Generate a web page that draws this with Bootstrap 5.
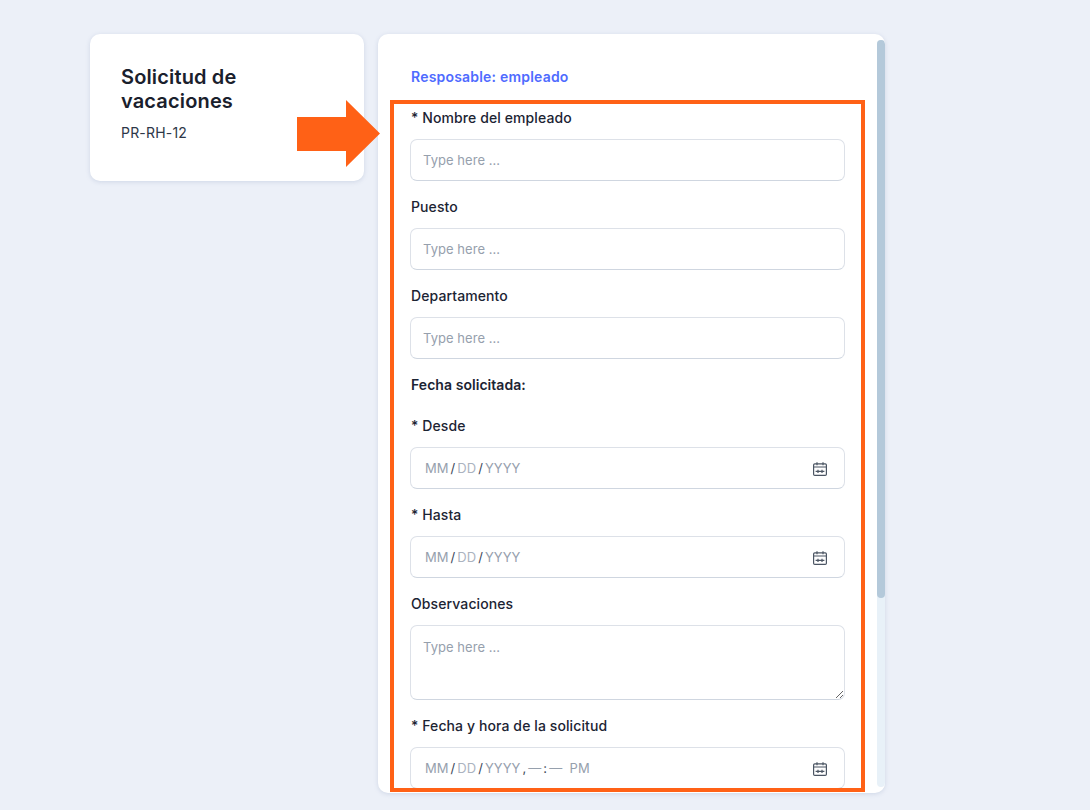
<!DOCTYPE html>
<html lang="es">
<head>
<meta charset="utf-8">
<title>Solicitud de vacaciones</title>
<link href="https://cdn.jsdelivr.net/npm/bootstrap@5.3.0/dist/css/bootstrap.min.css" rel="stylesheet">
<style>
html,body{height:810px;overflow:hidden}
body{background:#ecf0f8;font-family:Inter,"Liberation Sans",sans-serif;color:#1c2433}
.stage{position:relative;padding:34px 0 0 90px;gap:14px}
.side-card{width:274px;height:147px;padding:31px 31px 0 31px;border-radius:10px;border:0;box-shadow:0 1px 4px rgba(120,140,180,.25)}
.side-title{font-size:20px;line-height:24px;font-weight:600;letter-spacing:.15px;margin:0 0 10px;color:#1a202c}
.side-code{font-size:14px;line-height:20px;letter-spacing:.2px;color:#2d3748}
.form-card{position:relative;width:507px;height:759px;padding:33px 40px 0 32px;border-radius:10px;border:0;overflow:hidden;box-shadow:0 1px 4px rgba(120,140,180,.25)}
.resp{font-size:14px;line-height:20px;font-weight:600;letter-spacing:.2px;color:#4f6bff;margin-bottom:20px;padding-left:1px}
.fld{margin-bottom:15px}
.fld-label{display:block;font-size:14px;line-height:20px;font-weight:500;letter-spacing:.1px;color:#1c2433;margin-bottom:11px;padding-left:1px;padding-top:1px}
.sect{font-size:14px;line-height:20px;font-weight:600;letter-spacing:.05px;color:#1c2433;margin-bottom:20px;padding-left:1px;padding-top:1px}
.fld-input.form-control{height:42px;font-size:13px;letter-spacing:.05px;padding:0 12px;border:1px solid #dde1e8;border-bottom-color:#cfd6e0;border-radius:7px;color:#1c2433;box-shadow:none}
.fld-input.form-control::placeholder{color:#96a0ad}
textarea.fld-input.form-control{height:75px;padding-top:11px;line-height:20px}
.date-input{height:42px;padding:2px 16px 0 14px;border:1px solid #dde1e8;border-bottom-color:#cfd6e0;border-radius:7px;font-size:13px;letter-spacing:.05px;color:#96a0ad;background:#fff}
.dim{color:#abb3bf}
.sep{color:#3c4757;margin:0 2px}
.cal{width:16px;height:16px;color:#4b5563}
.track{position:absolute;left:499px;top:6px;width:8px;height:747px;background:#e8f1f8;border-radius:4px}
.thumb{width:8px;height:558px;background:#b4c9da;border-radius:4px}
.hl-box{position:absolute;left:390px;top:100px;width:475px;height:692px;border:4px solid #ff6116;pointer-events:none}
.hl-arrow{position:absolute;left:297px;top:100px;width:83px;height:67px}
</style>
</head>
<body>
<div class="stage d-flex align-items-start">
  <div class="card side-card">
    <h1 class="side-title">Solicitud de vacaciones</h1>
    <div class="side-code">PR-RH-12</div>
  </div>
  <div class="card form-card">
    <div class="resp">Resposable: empleado</div>
    <div class="fld"><label class="fld-label">* Nombre del empleado</label><input class="form-control fld-input" placeholder="Type here ..."></div>
    <div class="fld"><label class="fld-label">Puesto</label><input class="form-control fld-input" placeholder="Type here ..."></div>
    <div class="fld"><label class="fld-label">Departamento</label><input class="form-control fld-input" placeholder="Type here ..."></div>
    <div class="sect">Fecha solicitada:</div>
    <div class="fld"><label class="fld-label">* Desde</label>
      <div class="date-input d-flex align-items-center justify-content-between"><span>MM<span class="sep">/</span><span class="dim">DD</span><span class="sep">/</span>YYYY</span>
        <svg class="cal" viewBox="0 0 16 16" fill="none" stroke="currentColor" stroke-width="1.2"><rect x="1.6" y="2.8" width="12.8" height="11.6" rx="1.2"/><path d="M1.6 6h12.8M5 1.2v3M11 1.2v3M3.6 10.4h8.8M6 8.8v3.2M10 8.8v3.2"/></svg></div></div>
    <div class="fld"><label class="fld-label">* Hasta</label>
      <div class="date-input d-flex align-items-center justify-content-between"><span>MM<span class="sep">/</span><span class="dim">DD</span><span class="sep">/</span>YYYY</span>
        <svg class="cal" viewBox="0 0 16 16" fill="none" stroke="currentColor" stroke-width="1.2"><rect x="1.6" y="2.8" width="12.8" height="11.6" rx="1.2"/><path d="M1.6 6h12.8M5 1.2v3M11 1.2v3M3.6 10.4h8.8M6 8.8v3.2M10 8.8v3.2"/></svg></div></div>
    <div class="fld"><label class="fld-label">Observaciones</label><textarea class="form-control fld-input" placeholder="Type here ..."></textarea></div>
    <div class="fld"><label class="fld-label">* Fecha y hora de la solicitud</label>
      <div class="date-input d-flex align-items-center justify-content-between"><span>MM<span class="sep">/</span><span class="dim">DD</span><span class="sep">/</span>YYYY<span class="sep">,</span>—<span class="sep">:</span>— &nbsp;PM</span>
        <svg class="cal" viewBox="0 0 16 16" fill="none" stroke="currentColor" stroke-width="1.2"><rect x="1.6" y="2.8" width="12.8" height="11.6" rx="1.2"/><path d="M1.6 6h12.8M5 1.2v3M11 1.2v3M3.6 10.4h8.8M6 8.8v3.2M10 8.8v3.2"/></svg></div></div>
    <div class="track"><div class="thumb"></div></div>
  </div>
  <div class="hl-box"></div>
  <svg class="hl-arrow" viewBox="0 0 83 67"><polygon fill="#ff6116" points="0,17 49,17 49,0 83,33.5 49,67 49,51 0,51"/></svg>
</div>
<script src="https://cdn.jsdelivr.net/npm/bootstrap@5.3.0/dist/js/bootstrap.bundle.min.js"></script>
</body>
</html>
